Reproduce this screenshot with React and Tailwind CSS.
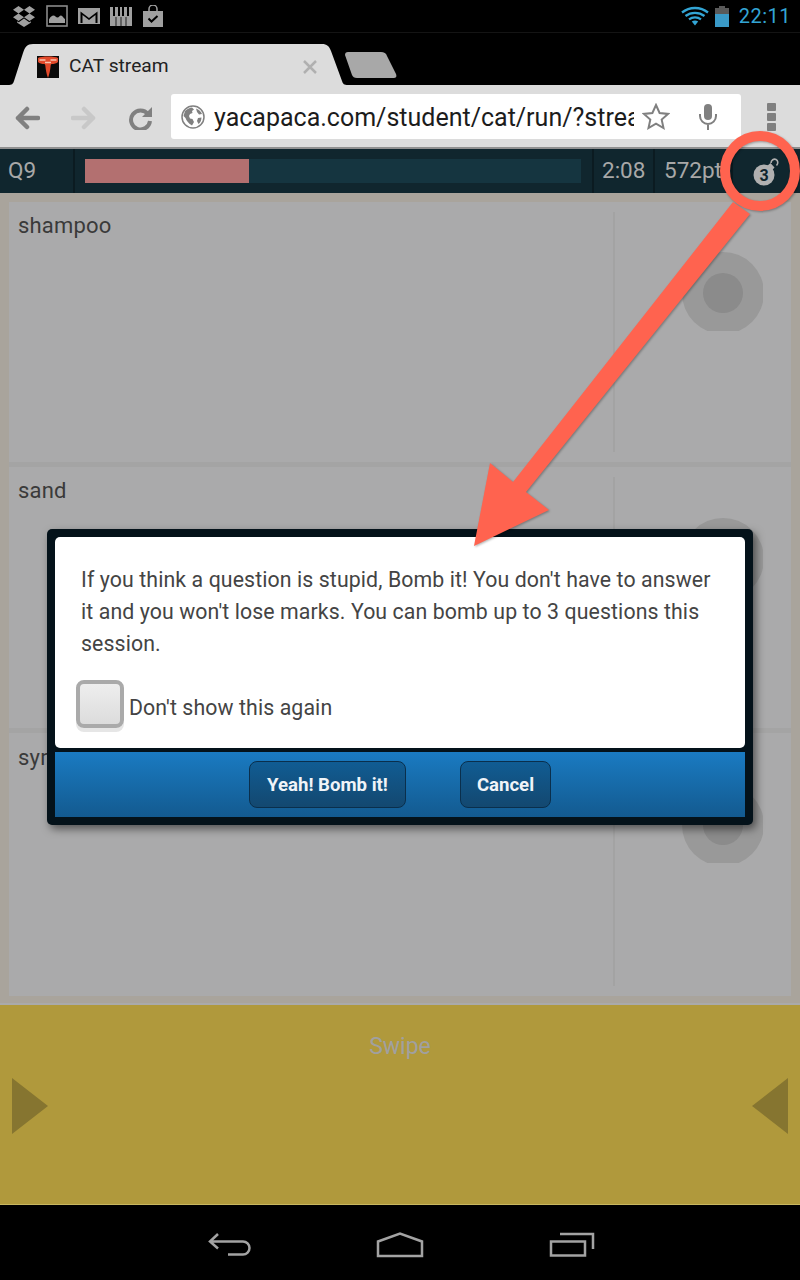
import React from 'react';

function Dropbox() {
  return (
    <svg width="24" height="22" viewBox="0 0 24 22" fill="#a0a0a0">
      <path d="M6.5 1 1 4.8l5.5 3.7L12 4.8zM17.5 1 12 4.8l5.5 3.7L23 4.8zM1 12.2 6.5 16 12 12.2 6.5 8.5zM17.5 8.5 12 12.2l5.5 3.8 5.5-3.8z" />
      <path d="M12 13.6 6.8 17.2l-1.6-1v1.6L12 22l6.8-4.2v-1.6l-1.6 1z" />
    </svg>
  );
}

function Gallery() {
  return (
    <svg width="22" height="22" viewBox="0 0 22 22">
      <rect x="1" y="1" width="20" height="20" fill="none" stroke="#8a8a8a" strokeWidth="1.6" />
      <path d="M3 18v-3.5c1.5-3 3-4 4.5-4s2.5 2 4 2 2-2 3.5-2 2.5 3 4 3.5V18z" fill="#a0a0a0" />
    </svg>
  );
}

function Gmail() {
  return (
    <svg width="22" height="16" viewBox="0 0 22 16">
      <rect width="22" height="16" fill="#a0a0a0" />
      <path d="M2.5 15V3.5L11 10l8.5-6.5V15z" fill="#000" />
      <path d="M4.5 15V7l6.5 5 6.5-5v8z" fill="#a0a0a0" />
    </svg>
  );
}

function Piano() {
  return (
    <svg width="22" height="20" viewBox="0 0 22 20" fill="#a0a0a0">
      <path d="M0 1h3v9h2V1h3v9h2V1h2v9h2V1h3v9h2V1h3v19H0z" />
      <path d="M5.6 11h.8v9h-.8zM10.6 11h.8v9h-.8zM15.6 11h.8v9h-.8z" fill="#000" />
    </svg>
  );
}

function Bag() {
  return (
    <svg width="22" height="22" viewBox="0 0 22 22">
      <path d="M7 6V4a4 4 0 0 1 8 0v2" fill="none" stroke="#a0a0a0" strokeWidth="1.5" />
      <path d="M1 6h20v16H1z" fill="#a0a0a0" />
      <path d="m6.5 13.5 3 3 6-5.5" fill="none" stroke="#000" strokeWidth="2" />
    </svg>
  );
}

function Wifi() {
  return (
    <svg width="28" height="20" viewBox="0 0 28 20" fill="none" stroke="#33a5d5" strokeWidth="2.3">
      <path d="M1 6.5C8.5.5 19.5.5 27 6.5" />
      <path d="M4.5 10c5.5-4.3 13.5-4.3 19 0" />
      <path d="M8 13.3c3.5-2.7 8.5-2.7 12 0" />
      <path d="m10.8 15.5 3.2 4 3.2-4c-2-1.2-4.4-1.2-6.4 0z" fill="#33a5d5" stroke="none" />
    </svg>
  );
}

function Battery() {
  return (
    <svg width="14" height="21" viewBox="0 0 14 21">
      <path d="M4 0h6v2h4v6H0V2h4z" fill="#5a5a5a" />
      <path d="M0 8h14v13H0z" fill="#3a9ac8" />
    </svg>
  );
}

function Favicon() {
  return (
    <svg width="22" height="22" viewBox="0 0 22 22">
      <rect width="22" height="22" fill="#0a0a0a" />
      <path d="M1 2c3-2 17-2 20 0v4c-1.5 1.5-4 2-6 2-.8 0-1.2.6-1.3 1.5-.4 4-1.3 9-2.7 12.5C9.6 18.5 8.7 13.5 8.3 9.5 8.2 8.6 7.8 8 7 8 5 8 2.5 7.5 1 6z" fill="#e2492a" />
      <path d="M2.5 4h6M13.5 4h6M8 6.5h6" stroke="#f6c3ae" strokeWidth="1.6" fill="none" />
    </svg>
  );
}

function Globe() {
  return (
    <svg width="24" height="24" viewBox="0 0 24 24">
      <circle cx="12" cy="12" r="11" fill="#fff" stroke="#808080" strokeWidth="1.5" />
      <path d="M4 6c2-2 4-3 7-3.5l2 2-2 1.5.5 2-2.5 1-1 2 1 2.5 2.5.5 1.5 3-2 3.5C7 18 5.5 15.5 4.5 13L2.5 11zM15 3.5c3 1 5 3 6 5.5l-3 .5-2-2.5zM17 13l3.5-.5c0 2.5-1 5-3 6.5l-1.5-3z" fill="#808080" />
    </svg>
  );
}

function Bomb() {
  return (
    <svg width="30" height="32" viewBox="0 0 30 32">
      <circle cx="12" cy="20" r="10.5" fill="#b0b0b0" />
      <path d="m15 11 3.5-3 4 4.5-3 3.5z" fill="#b0b0b0" />
      <path d="M19 8c0-3 3-4.5 5-3.5s2.5 4 .5 6" fill="none" stroke="#b0b0b0" strokeWidth="1.6" />
      <text x="12" y="26" textAnchor="middle" fontSize="16" fontWeight="700" fill="#10262e" fontFamily="Roboto, sans-serif">3</text>
    </svg>
  );
}

function Answer({ label, rowClass, labelClass, circleClass }) {
  return (
    <div className={`flex bg-[#aaaaab] ${rowClass}`}>
      <div className={`w-[604px] pl-[9px] text-[22px] leading-[32px] text-[#3a3a3a] tracking-[0.2px] ${labelClass}`}>{label}</div>
      <div className="flex-1 flex my-[10px] border-l-2 border-[#a3a3a3]">
        <div className={`ml-[67px] w-[81px] h-[79px] overflow-hidden ${circleClass}`}>
          <div className="w-[82px] h-[82px] rounded-full bg-[#999999] flex items-center justify-center">
            <div className="w-[40px] h-[40px] rounded-full bg-[#8b8b8b]"></div>
          </div>
        </div>
      </div>
    </div>
  );
}

export default function App() {
  return (
    <div className="relative w-[800px] h-[1280px] overflow-hidden bg-black flex flex-col font-['Roboto',sans-serif]">
      {/* Status bar */}
      <div className="h-[33px] flex items-center justify-between pl-[12px] pr-[9px] border-b border-[#141414]">
        <div className="flex items-center gap-[10px]">
          <Dropbox />
          <Gallery />
          <Gmail />
          <Piano />
          <Bag />
        </div>
        <div className="flex items-center">
          <Wifi />
          <div className="ml-[6px] mr-[10px]"><Battery /></div>
          <span className="text-[20px] leading-none text-[#33a5d5] tracking-[0.5px]">22:11</span>
        </div>
      </div>

      {/* Tab strip */}
      <div className="relative h-[52px] flex items-end">
        <svg className="absolute left-0 top-0" width="410" height="52" viewBox="0 0 410 52">
          <path d="M8 52c4 0 5-1 6-4L23 20c2-6 4-9 10-9h289c5 0 7 2 9 7l11 30c1 3 2 4 6 4z" fill="#dcdcdc" />
          <path d="M345 22c0-2 1-3 3-3h33c3 0 5 1 6 4l9 18c1 3 0 4-3 4h-36c-3 0-4-1-5-3z" fill="#a8a8a8" />
        </svg>
        <div className="relative h-[52px] flex items-center pl-[37px] pt-[15px]">
          <Favicon />
          <span className="ml-[10px] w-[234px] text-[19.2px] text-[#222]">CAT stream</span>
          <svg width="14" height="14" viewBox="0 0 14 14" stroke="#b0b0b0" strokeWidth="2.5">
            <path d="M1 1l12 12M13 1L1 13" />
          </svg>
        </div>
      </div>

      {/* Toolbar */}
      <div className="h-[64px] bg-[#dcdcdc] border-b-2 border-[#8f8f8f] flex items-center pt-[1px]">
        <svg className="ml-[15px] mt-[2px]" width="25" height="24" viewBox="0 0 25 24" fill="none" stroke="#808080" strokeWidth="4.5" strokeLinecap="round" strokeLinejoin="round">
          <path d="M23 12H3M12 3l-9 9 9 9" />
        </svg>
        <svg className="ml-[31px] mt-[2px]" width="25" height="24" viewBox="0 0 25 24" fill="none" stroke="#c8c8c8" strokeWidth="4.5" strokeLinecap="round" strokeLinejoin="round">
          <path d="M2 12h20M13 3l9 9-9 9" />
        </svg>
        <svg className="ml-[33px] mt-[2px]" width="24" height="24" viewBox="0 0 24 24" fill="none" stroke="#808080" strokeWidth="4">
          <path d="M19 8a9.5 9.5 0 1 0 2 7" />
          <path d="M23 1v10H13z" fill="#808080" stroke="none" />
        </svg>
        <div className="ml-[18px] w-[570px] h-[45px] bg-white rounded-[3px] flex items-center pl-[10px]">
          <Globe />
          <div className="ml-[9px] mt-[3px] w-[420px] overflow-hidden whitespace-nowrap text-[25px] leading-[42px] text-[#1c1c1c]">yacapaca.com/student/cat/run/?stream</div>
          <svg className="ml-[8px]" width="28" height="27" viewBox="0 0 28 27" fill="none" stroke="#808080" strokeWidth="2">
            <path d="m14 2 3.6 8 8.4.9-6.3 5.7 1.8 8.4L14 20.7 6.5 25l1.8-8.4L2 10.9l8.4-.9z" />
          </svg>
          <svg className="ml-[28px]" width="20" height="28" viewBox="0 0 20 28" fill="none" stroke="#808080">
            <rect x="6" y="1" width="8" height="16" rx="4" fill="#808080" stroke="none" />
            <path d="M2 11v2a8 8 0 0 0 16 0v-2M10 21v6" strokeWidth="2" />
          </svg>
        </div>
        <div className="ml-[26px] flex flex-col gap-[2px]">
          <div className="w-[9px] h-[8px] bg-[#808080] rounded-[1px]"></div>
          <div className="w-[9px] h-[8px] bg-[#808080] rounded-[1px]"></div>
          <div className="w-[9px] h-[8px] bg-[#808080] rounded-[1px]"></div>
        </div>
      </div>

      {/* Question header */}
      <div className="h-[44px] bg-[#10262e] flex items-stretch text-[22.5px] text-[#a8a8a8]">
        <div className="w-[75px] pl-[8px] flex items-center border-r-2 border-[#0b1b21]">Q9</div>
        <div className="w-[519px] pl-[10px] flex items-center border-r-2 border-[#0b1b21]">
          <div className="w-[496px] h-[24px] bg-[#153540]">
            <div className="w-[164px] h-full bg-[#b37070]"></div>
          </div>
        </div>
        <div className="w-[61px] pl-[8px] flex items-center border-r-2 border-[#0b1b21]">2:08</div>
        <div className="w-[78px] pl-[9px] flex items-center overflow-hidden whitespace-nowrap border-r-2 border-[#0b1b21]">572pt</div>
        <div className="flex-1 pl-[19px] flex items-center"><Bomb /></div>
      </div>

      {/* Answers */}
      <div className="h-[810px] bg-[#a9a49c] px-[9px] pt-[9px] pb-[7px]">
        <div className="h-full bg-[#a4a4a4] flex flex-col">
          <Answer label="shampoo" rowClass="h-[260px]" labelClass="pt-[8px]" circleClass="mt-[40px]" />
          <Answer label="sand" rowClass="h-[261px] mt-[5px]" labelClass="pt-[8px]" circleClass="mt-[41px]" />
          <Answer label="syrup" rowClass="h-[263px] mt-[5px]" labelClass="pt-[9px]" circleClass="mt-[41px]" />
        </div>
      </div>

      {/* Swipe */}
      <div className="h-[201px] bg-[#b0993c] border-t-2 border-[#aaaaaa] flex flex-col items-center">
        <span className="mt-[26px] text-[23px] leading-[32px] text-[#a0a0a0]">Swipe</span>
        <div className="w-full mt-[15px] px-[12px] flex justify-between">
          <svg width="36" height="56" viewBox="0 0 36 56"><path d="M0 0l36 28L0 56z" fill="#867530" /></svg>
          <svg width="36" height="56" viewBox="0 0 36 56"><path d="M36 0L0 28l36 28z" fill="#867530" /></svg>
        </div>
      </div>

      {/* Nav bar */}
      <div className="flex-1 bg-black flex items-start justify-center pt-[27px] pl-[3px] border-t border-[#c8b760]">
        <svg width="44" height="26" viewBox="0 0 44 26" fill="none" stroke="#a3a3a3" strokeWidth="2.5">
          <path d="M10 2 2 9.5l8 7M2 9.5h33a6.5 6.5 0 0 1 0 13H20" />
        </svg>
        <svg className="ml-[124px]" width="48" height="26" viewBox="0 0 48 26" fill="none" stroke="#a3a3a3" strokeWidth="2.5">
          <path d="M2 9.5 24 1.5l22 8v14.5H2z" />
        </svg>
        <svg className="ml-[125px]" width="46" height="26" viewBox="0 0 46 26" fill="none" stroke="#a3a3a3" strokeWidth="2.5">
          <path d="M11 2h33v15" />
          <path d="M2 9.5h34v14H2z" />
        </svg>
      </div>

      {/* Dialog */}
      <div className="absolute left-[47px] top-[529px] w-[706px] h-[296px] bg-[#04121a] rounded-[5px] p-[8px] shadow-[3px_4px_8px_rgba(0,0,0,0.5)] flex flex-col">
        <div className="h-[211px] bg-white rounded-[5px] px-[26px] pt-[27px] text-[#444444]">
          <p className="text-[21.3px] leading-[32px] tracking-[0.1px]">
            If you think a question is stupid, Bomb it! You don't have to answer it and you won't lose marks. You can bomb up to 3 questions this session.
          </p>
          <div className="flex items-center mt-[20px] -ml-[5px]">
            <div className="w-[48px] h-[48px] rounded-[8px] border-4 border-[#aaaaaa] bg-gradient-to-b from-[#eeeeee] to-[#dcdcdc] shadow-[0_4px_0_#e6e6e6]"></div>
            <span className="ml-[5px] mt-[8px] text-[21.3px] tracking-[0.1px] leading-[32px]">Don't show this again</span>
          </div>
        </div>
        <div className="mt-[4px] flex-1 bg-gradient-to-b from-[#1a7bc2] to-[#135a90] flex items-center justify-center gap-[54px]">
          <button className="w-[157px] h-[47px] pt-[2px] rounded-[8px] border border-[#0a2f4c] bg-gradient-to-b from-[#105c93] to-[#134870] text-[18.6px] font-bold text-[#f0f4f8]">Yeah! Bomb it!</button>
          <button className="w-[91px] h-[47px] pt-[2px] rounded-[8px] border border-[#0a2f4c] bg-gradient-to-b from-[#105c93] to-[#134870] text-[18.6px] font-bold text-[#f0f4f8]">Cancel</button>
        </div>
      </div>

      {/* Annotation arrow and ring */}
      <svg className="absolute left-0 top-0 pointer-events-none drop-shadow-[1px_1px_1px_rgba(0,0,0,0.3)]" width="800" height="600" viewBox="0 0 800 600">
        <circle cx="760" cy="171" r="35" fill="none" stroke="#ff634f" strokeWidth="10" />
        <path d="M733 202 750 214 526 492 549 510 474 546 490 463 513 482z" fill="#ff634f" />
      </svg>
    </div>
  );
}
